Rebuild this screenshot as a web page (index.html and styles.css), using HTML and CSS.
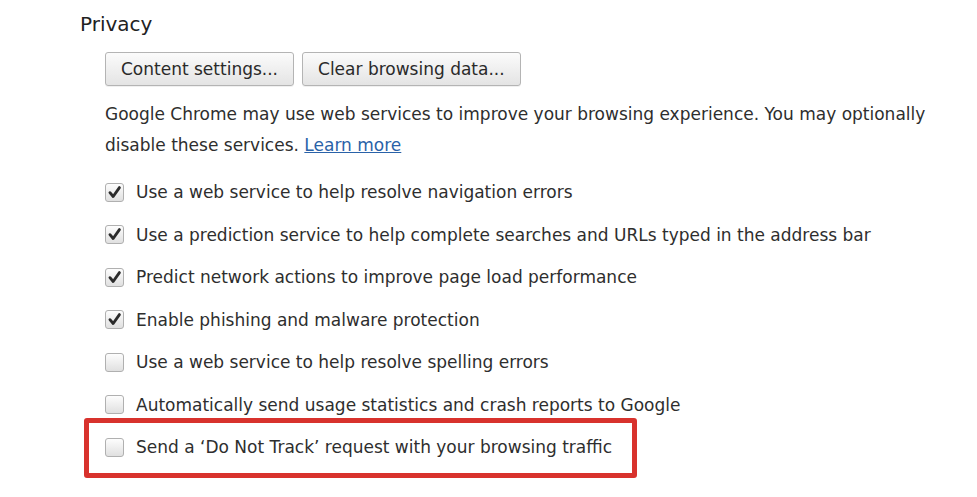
FILE: index.html
```html
<!DOCTYPE html>
<html lang="en">
<head>
    <meta charset="UTF-8">
    <title>Privacy</title>
    <link rel="stylesheet" href="styles.css">
</head>
<body>
    <div class="section">
        <h3 class="section-title">Privacy</h3>
        <div class="section-body">
            <div class="buttons">
                <button class="btn">Content settings...</button>
                <button class="btn">Clear browsing data...</button>
            </div>

            <p class="note">Google Chrome may use web services to improve your browsing experience. You may optionally disable these services. <a href="#">Learn more</a></p>

            <ul class="options">
                <li class="option"><span class="check on"><svg viewBox="0 0 18 18"><path d="M4.2 9.2 L7.6 13.2 L14.2 3.8" /></svg></span>Use a web service to help resolve navigation errors</li>
                <li class="option"><span class="check on"><svg viewBox="0 0 18 18"><path d="M4.2 9.2 L7.6 13.2 L14.2 3.8" /></svg></span>Use a prediction service to help complete searches and URLs typed in the address bar</li>
                <li class="option"><span class="check on"><svg viewBox="0 0 18 18"><path d="M4.2 9.2 L7.6 13.2 L14.2 3.8" /></svg></span>Predict network actions to improve page load performance</li>
                <li class="option"><span class="check on"><svg viewBox="0 0 18 18"><path d="M4.2 9.2 L7.6 13.2 L14.2 3.8" /></svg></span>Enable phishing and malware protection</li>
                <li class="option"><span class="check"></span>Use a web service to help resolve spelling errors</li>
                <li class="option"><span class="check"></span>Automatically send usage statistics and crash reports to Google</li>
                <li class="option marked"><span class="check"></span>Send a ‘Do Not Track’ request with your browsing traffic</li>
            </ul>
        </div>
    </div>
</body>
</html>
```

FILE: styles.css
```css
body {
    margin: 0;
    padding-bottom: 26px;
    background: #fff;
    color: #2e2e2e;
    font-family: "DejaVu Sans", "Liberation Sans", sans-serif;
}

.section { padding: 12px 0 0 80px; }
.section-title { margin: 0; font-size: 20px; font-weight: normal; line-height: 24px; color: #222; }
.section-body { padding-left: 25px; }

.buttons { display: flex; gap: 8px; margin-top: 16px; }
.btn {
    height: 34px;
    padding: 0 15px;
    font-family: inherit;
    font-size: 17px;
    color: #2a2a2a;
    border: 1px solid #b4b4b4;
    border-radius: 3px;
    background: linear-gradient(#fbfbfb, #e4e4e4);
    box-shadow: 0 1px 0 rgba(0,0,0,0.06);
}

.note { margin: 13px 0 0; font-size: 17px; line-height: 31px; max-width: 840px; }
.note a { color: #2a62a8; }

.options { list-style: none; margin: 10px 0 0; padding: 0; }
.option { display: flex; align-items: center; height: 42.5px; font-size: 17px; white-space: nowrap; }

.check {
    width: 19px;
    height: 19px;
    margin-right: 12px;
    box-sizing: border-box;
    border: 1px solid #b0b0b0;
    border-radius: 3px;
    background: linear-gradient(#fdfdfd, #e0e0e0);
    flex: none;
}
.check svg { display: block; width: 17px; height: 17px; }
.check path { fill: none; stroke: #2b2b2b; stroke-width: 3; stroke-linecap: round; stroke-linejoin: round; }

/* red highlight around the last option */
.marked { position: relative; }
.marked::after {
    content: "";
    position: absolute;
    left: -21px;
    top: -8px;
    width: 553px;
    height: 60px;
    box-sizing: border-box;
    border: 5px solid #d8322d;
    border-radius: 3px;
}
```
